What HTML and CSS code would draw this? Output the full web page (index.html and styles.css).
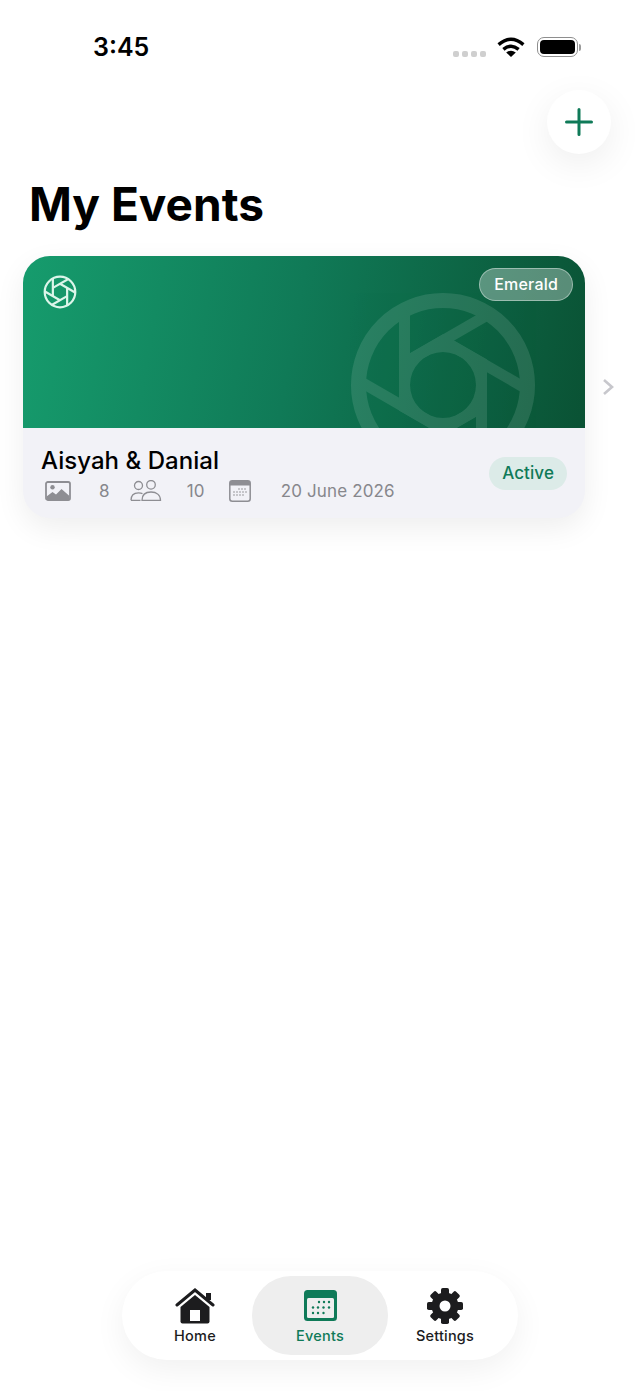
FILE: index.html
```html
<!DOCTYPE html>
<html lang="en">
<head>
    <meta charset="UTF-8">
    <meta name="viewport" content="width=device-width, initial-scale=1.0">
    <title>My Events</title>
    <link rel="stylesheet" href="styles.css">
</head>
<body>

    <svg class="defs" width="0" height="0">
        <symbol id="aperture-big" viewBox="-100 -100 200 200">
            <path fill="#fff" fill-rule="evenodd" d="M-44 -25.400L0 -50.800L44 -25.400V25.400L0 50.800L-44 25.400Z M33 0A33 33 0 1 0 -33 0A33 33 0 1 0 33 0Z"/>
            <g fill="none" stroke="#fff">
                <circle r="84.5" stroke-width="15"/>
                <g stroke-width="11">
                    <line x1="-38.500" y1="22" x2="-38.500" y2="-75"/>
                    <line x1="-38.500" y1="22" x2="-38.500" y2="-75" transform="rotate(60)"/>
                    <line x1="-38.500" y1="22" x2="-38.500" y2="-75" transform="rotate(120)"/>
                    <line x1="-38.500" y1="22" x2="-38.500" y2="-75" transform="rotate(180)"/>
                    <line x1="-38.500" y1="22" x2="-38.500" y2="-75" transform="rotate(240)"/>
                    <line x1="-38.500" y1="22" x2="-38.500" y2="-75" transform="rotate(300)"/>
                </g>
            </g>
        </symbol>
        <symbol id="aperture-small" viewBox="-100 -100 200 200">
            <g fill="none" stroke="currentColor" stroke-width="13">
                <circle r="90"/>
                <line x1="-42" y1="24" x2="-42" y2="-78"/>
                <line x1="-42" y1="24" x2="-42" y2="-78" transform="rotate(60)"/>
                <line x1="-42" y1="24" x2="-42" y2="-78" transform="rotate(120)"/>
                <line x1="-42" y1="24" x2="-42" y2="-78" transform="rotate(180)"/>
                <line x1="-42" y1="24" x2="-42" y2="-78" transform="rotate(240)"/>
                <line x1="-42" y1="24" x2="-42" y2="-78" transform="rotate(300)"/>
            </g>
        </symbol>
    </svg>

    <header class="status">
        <span class="time">3:45</span>
        <div class="status-right">
            <div class="signal"><i></i><i></i><i></i><i></i></div>
            <svg class="wifi" width="28" height="20" viewBox="0 0 28 20">
                <path d="M1.6 7.6Q14 -3.2 26.4 7.6M6.4 12.4Q14 6 21.6 12.4" fill="none" stroke="#000" stroke-width="3.4"/>
                <path d="M14 20L9.2 15.6Q14 11.8 18.8 15.6Z" fill="#000"/>
            </svg>
            <div class="battery"><div class="battery-fill"></div></div>
            <div class="battery-tip"></div>
        </div>
    </header>

    <div class="top-action">
        <button class="add-btn">
            <svg width="28" height="28" viewBox="0 0 28 28">
                <path d="M14 1.5V26.500M1.500 14H26.500" stroke="#0f7a58" stroke-width="3" stroke-linecap="round" fill="none"/>
            </svg>
        </button>
    </div>

    <h1 class="page-title">My Events</h1>

    <div class="card-row">
        <div class="card">
            <div class="hero">
                <svg class="hero-logo" width="34" height="34"><use href="#aperture-small"/></svg>
                <span class="theme-pill">Emerald</span>
                <svg class="hero-mark" width="200" height="200"><use href="#aperture-big"/></svg>
            </div>
            <div class="info">
                <div class="info-text">
                    <div class="event-name">Aisyah &amp; Danial</div>
                    <div class="meta">
                        <svg class="meta-photo" width="26" height="20" viewBox="0 0 26 20">
                            <rect x="1" y="1" width="24" height="18" rx="1.800" fill="none" stroke="#8e8e93" stroke-width="1.800"/>
                            <circle cx="7.500" cy="6.200" r="2.200" fill="#8e8e93"/>
                            <path d="M1.500 15.500L7.500 11L11 13.500L16.500 8L24.500 15V18.500H1.500Z" fill="#8e8e93"/>
                        </svg>
                        <span class="meta-num meta-photos">8</span>
                        <svg class="meta-people" width="32" height="22" viewBox="0 0 32 22">
                            <g fill="none" stroke="#8e8e93" stroke-width="1.300">
                                <circle cx="8.500" cy="5.500" r="4"/>
                                <circle cx="21" cy="4.800" r="4.300"/>
                                <path d="M1 20.300C1 15.500 4 12.800 8.500 12.800C10 12.800 11.500 13.100 12.500 13.600M1 20.300H10.500"/>
                                <path d="M12 20.300C12 15 15.500 12 21 12C26.500 12 30.500 15 30.500 20.300Z"/>
                            </g>
                        </svg>
                        <span class="meta-num meta-guests">10</span>
                        <svg class="meta-cal" width="22" height="22" viewBox="0 0 22 22">
                            <rect x="0.800" y="0.800" width="20.400" height="20.400" rx="2.500" fill="none" stroke="#8e8e93" stroke-width="1.500"/>
                            <path d="M0.800 5.500V3.300A2.500 2.500 0 0 1 3.300 0.800H18.700A2.500 2.500 0 0 1 21.200 3.300V5.500Z" fill="#8e8e93"/>
                            <g fill="#8e8e93">
                                <circle cx="10" cy="9" r=".8"/><circle cx="13" cy="9" r=".8"/><circle cx="16" cy="9" r=".8"/>
                                <circle cx="5" cy="12" r=".8"/><circle cx="8" cy="12" r=".8"/><circle cx="11" cy="12" r=".8"/><circle cx="14" cy="12" r=".8"/><circle cx="17" cy="12" r=".8"/>
                                <circle cx="5" cy="15" r=".8"/><circle cx="8" cy="15" r=".8"/><circle cx="11" cy="15" r=".8"/><circle cx="14" cy="15" r=".8"/>
                            </g>
                        </svg>
                        <span class="meta-num meta-date">20 June 2026</span>
                    </div>
                </div>
                <span class="status-pill">Active</span>
            </div>
        </div>
        <svg class="chevron" width="12" height="18" viewBox="0 0 12 18">
            <path d="M2 2L10 9L2 16" fill="none" stroke="#c7c7cc" stroke-width="2.600"/>
        </svg>
    </div>

    <nav class="tabbar">
        <a class="tab">
            <svg width="40" height="36" viewBox="0 0 40 36">
                <path d="M5.500 19L20 7L34.500 19V33.500A2 2 0 0 1 32.500 35.500H7.500A2 2 0 0 1 5.500 33.500Z" fill="#1c1c1e"/>
                <rect x="31" y="5" width="5" height="7" fill="#1c1c1e"/>
                <path d="M2 17L20 2L38 17" fill="none" stroke="#1c1c1e" stroke-width="3" stroke-linecap="round"/>
                <rect x="15" y="22" width="10" height="11" fill="#fff"/>
            </svg>
            <span>Home</span>
        </a>
        <a class="tab tab-active">
            <svg class="tab-cal" width="33" height="31" viewBox="0 0 33 31">
                <rect width="33" height="31" rx="3.500" fill="#0f7a58"/>
                <rect x="3" y="8" width="27" height="20" rx="1.500" fill="#eeeeee"/>
                <g fill="#0f7a58">
                    <circle cx="15" cy="12" r="1.200"/><circle cx="20" cy="12" r="1.200"/><circle cx="25" cy="12" r="1.200"/>
                    <circle cx="9" cy="17.500" r="1.200"/><circle cx="14" cy="17.500" r="1.200"/><circle cx="19.500" cy="17.500" r="1.200"/><circle cx="25" cy="17.500" r="1.200"/>
                    <circle cx="9" cy="23" r="1.200"/><circle cx="14" cy="23" r="1.200"/><circle cx="19.500" cy="23" r="1.200"/>
                </g>
            </svg>
            <span>Events</span>
        </a>
        <a class="tab">
            <svg width="36" height="36" viewBox="-18 -18 36 36">
                <g fill="#1c1c1e">
                    <circle r="13.500"/>
                    <rect x="-4" y="-18" width="8" height="36" rx="1.800"/>
                    <rect x="-4" y="-18" width="8" height="36" rx="1.800" transform="rotate(45)"/>
                    <rect x="-4" y="-18" width="8" height="36" rx="1.800" transform="rotate(90)"/>
                    <rect x="-4" y="-18" width="8" height="36" rx="1.800" transform="rotate(135)"/>
                </g>
                <circle r="5.500" fill="#fff"/>
            </svg>
            <span>Settings</span>
        </a>
    </nav>

</body>
</html>
```

FILE: styles.css
```css
* {
    box-sizing: border-box;
}

body {
    margin: 0;
    height: 1391px;
    overflow: hidden;
    display: flex;
    flex-direction: column;
    background: #fff;
    color: #000;
    font-family: Inter, "Noto Sans", sans-serif;
}

.defs {
    position: absolute;
}

/* status bar */
.status {
    height: 90px;
    padding: 32px 59px 0 93px;
    display: flex;
    justify-content: space-between;
    align-items: flex-start;
}

.time {
    font-size: 25px;
    line-height: 30px;
    font-weight: 600;
}

.status-right {
    display: flex;
    align-items: center;
    height: 30px;
}

.signal {
    display: flex;
    gap: 3px;
    margin-top: 14px;
    margin-right: 11px;
}

.signal i {
    width: 6px;
    height: 6px;
    border-radius: 2px;
    background: #cfcfcf;
}

.battery {
    width: 41px;
    height: 20px;
    margin-left: 12px;
    padding: 2px;
    border: 1.500px solid #8e8e8e;
    border-radius: 7px;
}

.battery-fill {
    height: 100%;
    background: #000;
    border-radius: 4px;
}

.battery-tip {
    width: 2px;
    height: 7px;
    margin-left: 1px;
    background: #9a9a9a;
    border-radius: 0 2px 2px 0;
}

/* add button */
.top-action {
    display: flex;
    justify-content: flex-end;
    padding-right: 29px;
}

.add-btn {
    width: 64px;
    height: 64px;
    padding: 0;
    border: none;
    border-radius: 50%;
    display: flex;
    align-items: center;
    justify-content: center;
    background: #fff;
    box-shadow: 0 10px 36px rgba(0, 0, 0, 0.07);
}

.page-title {
    margin: 23px 0 25px 29px;
    font-size: 46px;
    line-height: 54px;
    font-weight: 700;
}

/* event card */
.card-row {
    display: flex;
    align-items: center;
    padding-left: 23px;
}

.card {
    width: 562px;
    height: 262px;
    border-radius: 27px;
    background: #f2f2f7;
    box-shadow: 0 10px 30px rgba(0, 0, 0, 0.07);
    overflow: hidden;
}

.hero {
    position: relative;
    height: 172px;
    overflow: hidden;
    background: linear-gradient(100deg, #169c6d 0%, #107a57 48%, #0a5234 100%);
}

.hero-logo {
    position: absolute;
    left: 20px;
    top: 19px;
    color: #dcf5ea;
}

.hero-mark {
    position: absolute;
    left: 320px;
    top: 29px;
    opacity: 0.11;
}

.theme-pill {
    position: absolute;
    right: 12px;
    top: 12px;
    padding: 0 14px;
    height: 33px;
    line-height: 31px;
    font-size: 16px;
    font-weight: 500;
    letter-spacing: 0.2px;
    color: #fff;
    background: rgba(255, 255, 255, 0.32);
    border: 1px solid rgba(255, 255, 255, 0.4);
    border-radius: 17px;
}

.info {
    height: 90px;
    padding: 18px 18px 0;
    display: flex;
    justify-content: space-between;
    align-items: flex-start;
}

.event-name {
    font-size: 24px;
    line-height: 29px;
    font-weight: 500;
    letter-spacing: 0.05px;
}

.meta {
    display: flex;
    align-items: center;
    height: 24px;
    margin-top: 4px;
    padding-left: 4px;
}

.meta-num {
    font-size: 17px;
    color: #87878c;
    letter-spacing: 0.15px;
}

.meta-photos {
    margin-left: 28px;
}

.meta-people {
    margin-left: 20px;
}

.meta-guests {
    margin-left: 25px;
}

.meta-cal {
    margin-left: 24px;
}

.meta-date {
    margin-left: 30px;
}

.status-pill {
    margin-top: 11px;
    padding: 0 13px;
    height: 33px;
    line-height: 32px;
    font-size: 17px;
    font-weight: 500;
    letter-spacing: 0.1px;
    color: #0f7a58;
    background: #dcebe8;
    border-radius: 17px;
}

.chevron {
    margin-left: 17px;
}

/* bottom tabs */
.tabbar {
    margin: auto 122px 31px;
    height: 89px;
    padding: 5px 0;
    display: flex;
    justify-content: center;
    background: #fff;
    border-radius: 45px;
    box-shadow: 0 10px 32px rgba(0, 0, 0, 0.06);
}

.tab {
    width: 114px;
    display: flex;
    flex-direction: column;
    align-items: center;
    justify-content: flex-end;
    gap: 3px;
    padding-bottom: 10px;
    font-size: 14.500px;
    line-height: 18px;
    font-weight: 500;
    letter-spacing: 0.2px;
    color: #1c1c1e;
}

.tab-cal {
    margin-bottom: 3px;
}

.tab-active {
    width: 136px;
    background: #eeeeee;
    border-radius: 39px;
    color: #0f7a58;
}
```
